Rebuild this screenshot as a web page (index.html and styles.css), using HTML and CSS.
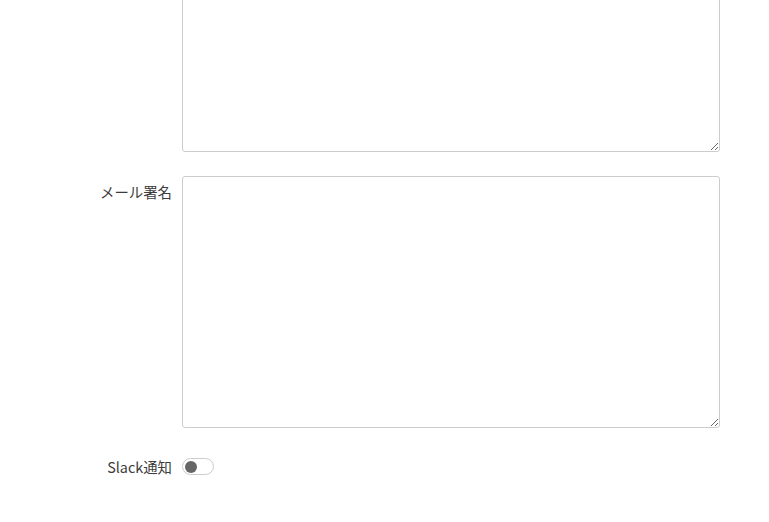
FILE: index.html
```html
<!DOCTYPE html>
<html lang="ja">
<head>
<meta charset="utf-8">
<link rel="stylesheet" href="styles.css">
</head>
<body>
<form class="form">
  <div class="row">
    <label class="label"></label>
    <textarea class="area"></textarea>
  </div>
  <div class="row">
    <label class="label">メール署名</label>
    <textarea class="area"></textarea>
  </div>
  <div class="row row-toggle">
    <label class="label label-center">Slack通知</label>
    <span class="toggle"><span class="knob"></span></span>
  </div>
</form>
</body>
</html>
```
FILE: styles.css
```css
html, body {
  margin: 0;
  padding: 0;
  background: #fff;
}
body {
  font-family: "Noto Sans CJK JP", "Noto Sans", sans-serif;
  font-size: 14.4px;
  color: #3c3c3c;
}
.form {
  display: flex;
  flex-direction: column;
  gap: 24px;
  margin-top: -100px;
}
.row {
  display: grid;
  grid-template-columns: 172px 538px;
  column-gap: 10px;
  align-items: start;
}
.label {
  text-align: right;
  padding-top: 5px;
  line-height: 21px;
}
.area {
  box-sizing: border-box;
  width: 538px;
  height: 252px;
  border: 1px solid #ccc;
  border-radius: 3px;
  margin: 0;
  padding: 6px 8px;
  font: inherit;
  resize: vertical;
  display: block;
}
.row-toggle {
  margin-top: 4px;
  align-items: center;
}
.label-center {
  padding-top: 0;
}
.toggle {
  box-sizing: border-box;
  width: 32px;
  height: 17px;
  border: 1px solid #ccc;
  border-radius: 9px;
  background: #fff;
  display: flex;
  align-items: center;
  padding-left: 2px;
}
.knob {
  width: 12px;
  height: 12px;
  border-radius: 50%;
  background: #666;
}
```
